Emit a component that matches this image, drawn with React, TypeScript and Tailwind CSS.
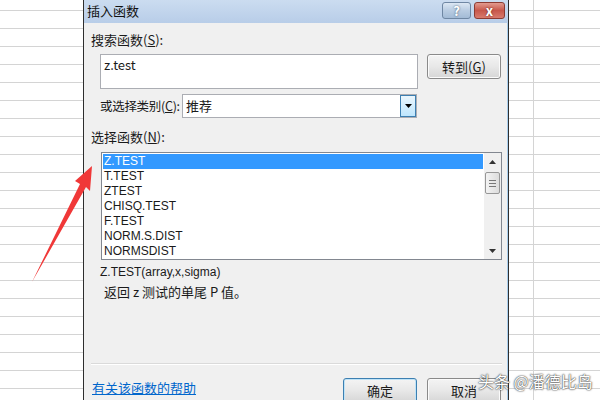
const FONT = { fontFamily: '"Noto Sans CJK SC", "Noto Sans", sans-serif' };
const LATIN = { fontFamily: '"Liberation Sans", "Noto Sans CJK SC", sans-serif' };

const functions = ['Z.TEST', 'T.TEST', 'ZTEST', 'CHISQ.TEST', 'F.TEST', 'NORM.S.DIST', 'NORMSDIST'];

function Key({ label, k }: { label: string; k: string }) {
  return (
    <>
      {label}(<span className="underline">{k}</span>):
    </>
  );
}

function Sheet() {
  return (
    <div className="flex flex-col bg-white">
      <div className="h-[11px] border-b border-[#d4d4d4]">
        <div className="h-full w-[534px] border-r border-[#d4d4d4]" />
      </div>
      {Array.from({ length: 22 }).map((_, i) => (
        <div key={i} className="h-[18px] border-b border-[#d4d4d4]">
          <div className="h-full w-[534px] border-r border-[#d4d4d4]" />
        </div>
      ))}
    </div>
  );
}

function WinButton({ children, primary }: { children: React.ReactNode; primary?: boolean }) {
  return (
    <div
      className={`flex h-[25px] w-[74px] items-center justify-center rounded-[3px] border bg-linear-to-b from-[#f4f4f4] via-[#e8e8e8] to-[#d6d6d6] text-[13px] text-[#1a1a1a] ${
        primary ? 'border-[#3c7fb1] shadow-[inset_0_0_0_1px_#bfe3f7]' : 'border-[#8a8a8a] shadow-[inset_0_0_0_1px_#fbfbfb]'
      }`}
    >
      {children}
    </div>
  );
}

export default function App() {
  return (
    <div className="relative h-[400px] w-[600px] overflow-hidden bg-white" style={FONT}>
      <Sheet />

      {/* Dialog window */}
      <div className="absolute left-[83px] top-0 flex h-[430px] w-[426px] flex-col border-x border-[#2e2e2e] bg-[#f0f0f0] shadow-[inset_-1px_0_0_#a8cdec]">
        {/* Title bar */}
        <div className="flex h-[23px] items-start justify-between bg-linear-to-b from-[#cbdcf0] to-[#b8cde8] pl-[3px] pr-[3px]">
          <span className="mt-[3px] text-[13px] leading-[16px] text-[#111]">插入函数</span>
          <div className="mt-[2px] flex gap-[3px]">
            <div className="flex h-[17px] w-[29px] items-center justify-center rounded-[3px] border border-[#6f87a3] bg-linear-to-b from-[#dce7f3] via-[#b9cce2] to-[#a3bbd6] text-[13px] font-bold leading-none text-white [text-shadow:0_0_2px_#3b4f66]">
              ?
            </div>
            <div className="flex h-[17px] w-[31px] items-center justify-center rounded-[3px] border border-[#8c3b33] bg-linear-to-b from-[#e29a8f] via-[#c7574b] to-[#d87a6d] text-[13px] font-bold leading-none text-white [text-shadow:0_0_2px_#5a1d17]">
              x
            </div>
          </div>
        </div>

        {/* Body */}
        <div className="flex flex-col text-[13px] text-[#1a1a1a]">
          <div className="ml-[7px] mt-[9px] h-[16px] leading-[16px]">
            <Key label="搜索函数" k="S" />
          </div>

          <div className="mt-[6px] flex items-start">
            <div className="ml-[16px] h-[35px] w-[318px] border border-[#abadb3] bg-white pl-[3px] pt-[2px] leading-[16px]">
              z.test
            </div>
            <div className="ml-[9px]">
              <WinButton>
                转到(<span className="underline">G</span>)
              </WinButton>
            </div>
          </div>

          <div className="mt-[5px] flex items-center">
            <div className="ml-[16px] w-[82px] shrink-0 whitespace-nowrap text-[12.5px] leading-[16px] tracking-[-0.3px]">
              <Key label="或选择类别" k="C" />
            </div>
            <div className="flex h-[24px] w-[235px] items-stretch border border-[#abadb3] bg-white">
              <span className="flex-1 pl-[3px] leading-[21px]">推荐</span>
              <div className="flex w-[16px] items-center justify-center border border-[#3c7fb1] bg-linear-to-b from-[#eaf6fd] to-[#bee6fd]">
                <svg width="7" height="4" viewBox="0 0 7 4">
                  <path d="M0 0h7L3.5 4z" fill="#000" />
                </svg>
              </div>
            </div>
          </div>

          <div className="ml-[7px] mt-[11px] h-[16px] leading-[16px]">
            <Key label="选择函数" k="N" />
          </div>

          {/* Function list */}
          <div className="ml-[17px] mt-[7px] flex h-[108px] w-[401px] border border-[#828790] bg-white">
            <div className="flex flex-1 flex-col p-[1px] text-[12px]" style={LATIN}>
              {functions.map((f, i) => (
                <div
                  key={f}
                  className={`h-[15px] pl-[1px] leading-[15px] ${i === 0 ? 'bg-[#3399ff] text-white' : 'text-[#1a1a1a]'}`}
                >
                  {f}
                </div>
              ))}
            </div>
            <div className="flex w-[17px] flex-col items-center bg-[#f0f0f0]">
              <div className="flex h-[17px] items-center justify-center">
                <svg width="7" height="4" viewBox="0 0 7 4">
                  <path d="M0 4h7L3.5 0z" fill="#333" />
                </svg>
              </div>
              <div className="mt-[2px] flex h-[22px] w-[15px] flex-col items-center justify-center gap-[2px] rounded-[2px] border border-[#979797] bg-linear-to-r from-[#f3f3f3] to-[#dcdcdc]">
                <div className="h-px w-[7px] bg-[#777]" />
                <div className="h-px w-[7px] bg-[#777]" />
                <div className="h-px w-[7px] bg-[#777]" />
              </div>
              <div className="mt-auto flex h-[17px] items-center justify-center">
                <svg width="7" height="4" viewBox="0 0 7 4">
                  <path d="M0 0h7L3.5 4z" fill="#333" />
                </svg>
              </div>
            </div>
          </div>

          <div className="ml-[16px] mt-[4px] h-[16px] text-[12px] leading-[16px]" style={LATIN}>
            Z.TEST(array,x,sigma)
          </div>
          <div className="ml-[20px] mt-[4px] h-[16px] leading-[16px]">返回 z 测试的单尾 P 值。</div>

          <div className="ml-[7px] mt-[63px] h-[2px] w-[411px] border-t border-b border-[#dadada] border-b-white" />

          <div className="mt-[13px] flex items-start pr-[7px]">
            <a className="ml-[8px] mt-[2px] leading-[16px] text-[#0066cc] underline">有关该函数的帮助</a>
            <div className="ml-auto flex gap-[10px]">
              <WinButton primary>确定</WinButton>
              <WinButton>取消</WinButton>
            </div>
          </div>
        </div>
      </div>

      {/* Red arrow annotation */}
      <svg className="pointer-events-none absolute left-0 top-0" width="600" height="400">
        <polygon points="92,166 75,181 80,184 32,282 86,187 90,191" fill="#f03838" />
      </svg>

      {/* Watermark */}
      <div className="absolute left-[478px] top-[371px] whitespace-nowrap text-[16px] leading-[20px] text-white [text-shadow:0_0_1px_#333,0_0_2px_#333]">
        头条 @潘德比岛
      </div>
    </div>
  );
}
